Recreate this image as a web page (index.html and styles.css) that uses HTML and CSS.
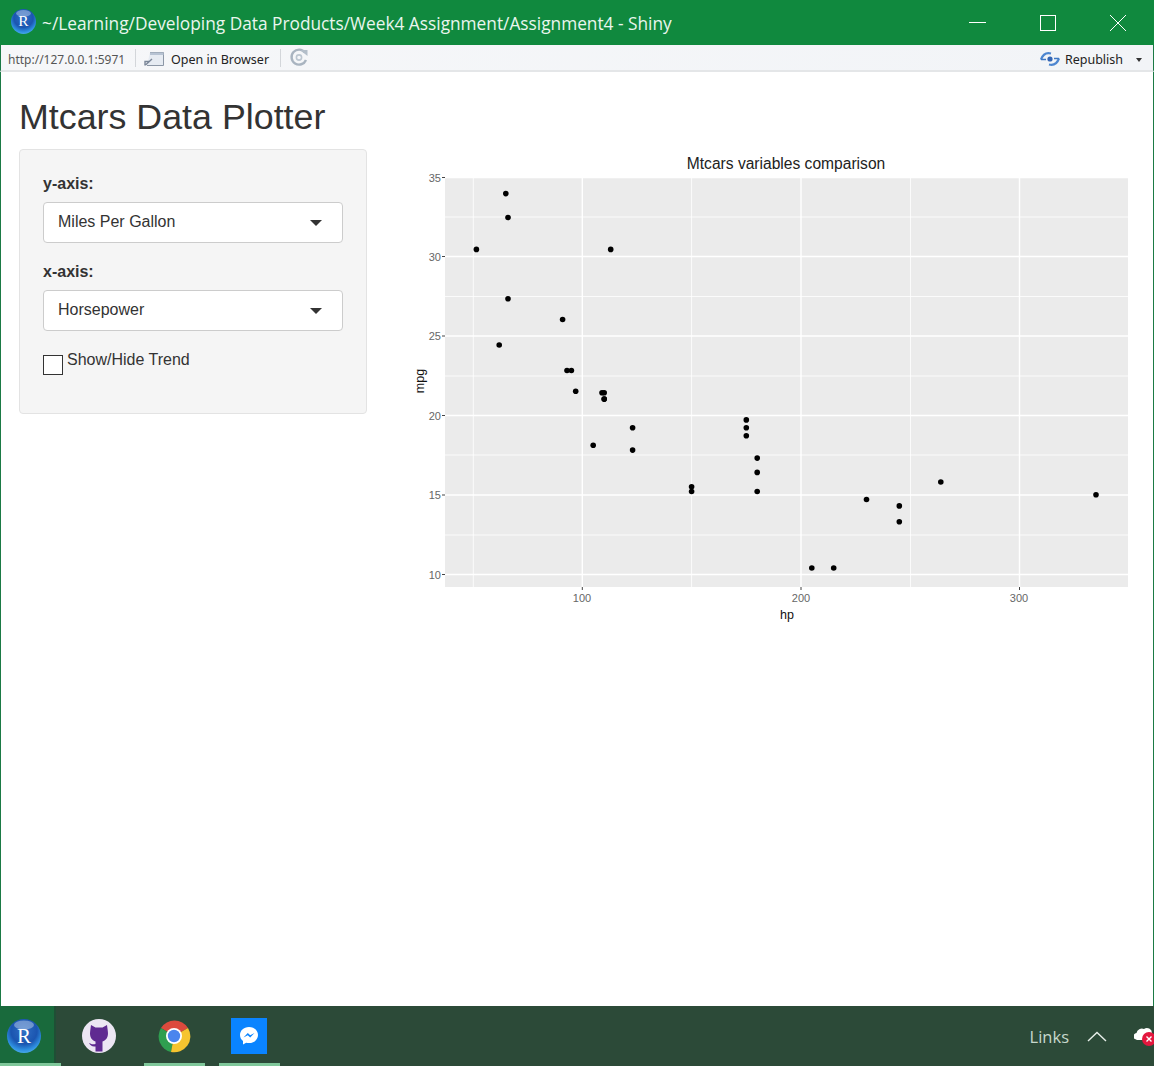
FILE: index.html
```html
<!DOCTYPE html>
<html lang="en">
<head>
<meta charset="utf-8">
<title>Mtcars Data Plotter</title>
<link rel="stylesheet" href="styles.css">
</head>
<body>
<svg class="defs" width="0" height="0" aria-hidden="true">
  <defs>
    <radialGradient id="rball" cx="50%" cy="35%" r="70%">
      <stop offset="0" stop-color="#2f6fc4"/>
      <stop offset="0.55" stop-color="#1b55b0"/>
      <stop offset="0.8" stop-color="#2e8fe0"/>
      <stop offset="1" stop-color="#54b6ee"/>
    </radialGradient>
    <symbol id="rlogo" viewBox="0 0 34 34">
      <circle cx="17" cy="17" r="17" fill="url(#rball)"/>
      <ellipse cx="17" cy="6" rx="10" ry="4.5" fill="#fff" opacity=".35"/>
      <text x="17" y="23.5" class="rlogo-letter" text-anchor="middle">R</text>
    </symbol>
  </defs>
</svg>
<div class="window">
  <header class="titlebar">
    <svg class="titlebar-logo" width="25" height="25"><use href="#rlogo"/></svg>
    <span class="titlebar-text">~/Learning/Developing Data Products/Week4 Assignment/Assignment4 - Shiny</span>
    <div class="winbtns">
      <div class="winbtn"><svg width="18" height="18" viewBox="0 0 18 18"><path d="M0 8.5H17" stroke="#fff"/></svg></div>
      <div class="winbtn"><svg width="18" height="18" viewBox="0 0 18 18"><rect x="1.5" y="1.5" width="15" height="15" fill="none" stroke="#fff"/></svg></div>
      <div class="winbtn"><svg width="18" height="18" viewBox="0 0 18 18"><path d="M1 1L17 17M17 1L1 17" stroke="#fff"/></svg></div>
    </div>
  </header>

  <div class="toolbar">
    <span class="url">http://127.0.0.1:5971</span>
    <span class="sep"></span>
    <svg class="open-icon" width="21" height="17" viewBox="0 0 21 17">
      <path d="M6 2.5H19.5V15.5H3" fill="#e6ebf2" stroke="#8c97a6"/>
      <path d="M6 2.5H19.5V5H6z" fill="#b7c3d3"/>
      <path d="M1 15.5V11.5H5M1.5 15L8 9" fill="none" stroke="#7a8698" stroke-width="1.4"/>
    </svg>
    <span class="tool-text">Open in Browser</span>
    <span class="sep sep-b"></span>
    <svg class="refresh-icon" width="20" height="20" viewBox="0 0 20 20">
      <path d="M16 5.5A7.5 7.5 0 1 0 17 13" fill="none" stroke="#a9b4c0" stroke-width="2.4"/>
      <path d="M11 3H18.5V9z" fill="#b3bec9"/>
      <circle cx="10" cy="10.5" r="2.6" fill="none" stroke="#bcc6d0" stroke-width="1.6"/>
    </svg>
    <div class="toolbar-right">
      <svg width="20" height="16" viewBox="0 0 20 16">
        <path d="M1 8.5C3 3 7 1.5 11 2.5" fill="none" stroke="#4d86d0" stroke-width="2.2"/>
        <path d="M19 7.5C17 13 13 14.5 9 13.5" fill="none" stroke="#4d86d0" stroke-width="2.2"/>
        <path d="M1 8.5H6M14 7.5H19" stroke="#3f78c4" stroke-width="1.6"/>
        <circle cx="10" cy="8" r="2.6" fill="#3566b4"/>
      </svg>
      <span class="tool-text">Republish</span>
      <span class="tool-caret"></span>
    </div>
  </div>

  <main class="page">
    <h1 class="page-title">Mtcars Data Plotter</h1>
    <div class="layout">
      <form class="sidebar">
        <div class="field">
          <label class="field-label">y-axis:</label>
          <div class="select"><span>Miles Per Gallon</span><i class="select-caret"></i></div>
        </div>
        <div class="field">
          <label class="field-label">x-axis:</label>
          <div class="select"><span>Horsepower</span><i class="select-caret"></i></div>
        </div>
        <label class="check">
          <input class="check-box" type="checkbox">
          <span>Show/Hide Trend</span>
        </label>
      </form>

      <svg class="plot" width="730" height="480" viewBox="0 0 730 480">
        <text x="376" y="18.5" class="plot-title" text-anchor="middle">Mtcars variables comparison</text>
        <rect x="35" y="27" width="683" height="410" fill="#ebebeb"/>
        <g class="grid-minor">
          <path d="M35 385H718M35 305H718M35 226H718M35 146.5H718M35 67H718"/>
          <path d="M63.3 27V437M281.6 27V437M500.5 27V437"/>
        </g>
        <g class="grid-major">
          <path d="M35 424.5H718M35 345H718M35 265.5H718M35 186H718M35 106.5H718M35 27.5H718"/>
          <path d="M172.3 27V437M391 27V437M609.5 27V437"/>
        </g>
        <g class="tick">
          <path d="M32 424.5H35M32 345H35M32 265.5H35M32 186H35M32 106.5H35M32 27.5H35"/>
          <path d="M172.3 437V440M391 437V440M609.5 437V440"/>
        </g>
        <g class="tick-label" text-anchor="end">
          <text x="31" y="428.5">10</text>
          <text x="31" y="349">15</text>
          <text x="31" y="269.5">20</text>
          <text x="31" y="190">25</text>
          <text x="31" y="110.5">30</text>
          <text x="31" y="31.5">35</text>
        </g>
        <g class="tick-label" text-anchor="middle">
          <text x="172" y="452">100</text>
          <text x="391" y="452">200</text>
          <text x="609" y="452">300</text>
        </g>
        <text x="377" y="469" class="axis-label" text-anchor="middle">hp</text>
        <text x="0" y="0" class="axis-label" text-anchor="middle" transform="translate(14 231) rotate(-90)">mpg</text>
        <g class="points">
          <circle cx="194.2" cy="249.1"/><circle cx="194.2" cy="249.1"/><circle cx="157" cy="220.5"/>
          <circle cx="194.2" cy="242.8"/><circle cx="336.3" cy="285.8"/><circle cx="183.2" cy="295.3"/>
          <circle cx="489.3" cy="355.9"/><circle cx="89.2" cy="195"/><circle cx="161.4" cy="220.5"/>
          <circle cx="222.6" cy="277.8"/><circle cx="222.6" cy="300.1"/><circle cx="347.2" cy="322.4"/>
          <circle cx="347.2" cy="308.1"/><circle cx="347.2" cy="341.5"/><circle cx="401.8" cy="418"/>
          <circle cx="423.7" cy="418"/><circle cx="456.5" cy="349.5"/><circle cx="98" cy="67.5"/>
          <circle cx="66.4" cy="99.4"/><circle cx="95.8" cy="43.6"/><circle cx="165.7" cy="241.2"/>
          <circle cx="281.6" cy="336.8"/><circle cx="281.6" cy="341.5"/><circle cx="489.3" cy="371.8"/>
          <circle cx="336.3" cy="277.8"/><circle cx="98" cy="148.8"/><circle cx="152.6" cy="169.5"/>
          <circle cx="200.7" cy="99.4"/><circle cx="530.8" cy="332"/><circle cx="336.3" cy="269.9"/>
          <circle cx="686" cy="344.7"/><circle cx="192" cy="242.8"/>
        </g>
      </svg>
    </div>
  </main>

  <footer class="taskbar">
    <div class="task task-r"><svg width="34" height="34"><use href="#rlogo"/></svg></div>
    <div class="task task-open">
      <svg width="34" height="34" viewBox="0 0 34 34">
        <circle cx="17" cy="17" r="17" fill="#ece6f3"/>
        <path d="M9 6L13.5 8.5H20.5L25 6L25.8 12C26.8 18 24 21.5 20.5 22.5V32.5H13.5V27.5C10 28 8.5 26.5 7 24C8.5 24.5 10 26 13.5 25V22.5C10 21.5 7.2 18 8.2 12Z" fill="#5f2a91"/>
      </svg>
    </div>
    <div class="task task-open">
      <svg width="34" height="34" viewBox="0 0 34 34">
        <path d="M17 17L4 9A16 16 0 0 1 31 9Z" fill="#dc4a3d"/>
        <path d="M17 17L4 9A16 16 0 0 0 14 33Z" fill="#2f9e50"/>
        <path d="M17 17L31 9A16 16 0 0 1 14 33Z" fill="#f6c42f"/>
        <circle cx="17" cy="17" r="8" fill="#fff"/>
        <circle cx="17" cy="17" r="6.2" fill="#4a85ee"/>
      </svg>
    </div>
    <div class="task task-open">
      <svg width="36" height="36" viewBox="0 0 36 36">
        <rect width="36" height="36" fill="#0a84ff"/>
        <path d="M18 9C12.5 9 9 12.8 9 17C9 19.6 10.2 21.6 12 23V26.5L15.2 24.7C16 25 17 25.1 18 25.1C23.5 25.1 27 21.2 27 17C27 12.8 23.5 9 18 9Z" fill="#fff"/>
        <path d="M12.5 19.5L16.8 15L19.2 17.3L23.5 15L19.2 19.5L16.8 17.2Z" fill="#0a84ff"/>
      </svg>
    </div>
    <div class="tray">
      <span class="tray-text">Links</span>
      <svg width="20" height="11" viewBox="0 0 20 11"><path d="M1 10L10 1.5L19 10" fill="none" stroke="#e8efea" stroke-width="1.4"/></svg>
      <svg class="tray-cloud" width="20" height="20" viewBox="0 0 20 20">
        <path d="M0 12.5A3.5 3.5 0 0 1 2.5 7A5.5 5.5 0 0 1 10 3A5 5 0 0 1 18 7V14H3Z" fill="#fff"/>
        <circle cx="15" cy="13" r="7" fill="#e3173e"/>
        <path d="M12.5 10.5L17.5 15.5M17.5 10.5L12.5 15.5" stroke="#fff" stroke-width="1.4"/>
      </svg>
    </div>
  </footer>
</div>
</body>
</html>
```

FILE: styles.css
```css
html, body {
  margin: 0;
  padding: 0;
  height: 100%;
}
body {
  font-family: "Liberation Sans", Arial, sans-serif;
  color: #333;
  background: #fff;
  overflow: hidden;
}
.defs {
  display: block;
  height: 0;
}
.rlogo-letter {
  font-family: "Liberation Serif", serif;
  font-size: 21px;
  fill: #fff;
}

.window {
  height: 1066px;
  display: flex;
  flex-direction: column;
}

/* title bar */
.titlebar {
  height: 45px;
  flex: none;
  background: #10893e;
  display: flex;
  align-items: center;
  padding-left: 11px;
  color: #fff;
}
.titlebar-logo {
  margin-top: -2px;
}
.titlebar-text {
  font-family: "Open Sans", "Noto Sans", sans-serif;
  font-size: 17.3px;
  margin-left: 6px;
  padding-top: 2px;
  color: #eaf6ee;
  white-space: nowrap;
}
.winbtns {
  margin-left: auto;
  display: flex;
  margin-right: 1px;
}
.winbtn {
  width: 70px;
  height: 45px;
  display: flex;
  align-items: center;
  justify-content: center;
}

/* toolbar */
.toolbar {
  height: 21px;
  padding: 4px 0 0 8px;
  flex: none;
  display: flex;
  align-items: center;
  border-left: 1px solid #1b7a45;
  border-right: 1px solid #1b7a45;
  border-bottom: 2px solid #e4e6e8;
  background: linear-gradient(to right, #f6f7f9, #f2f4f7);
  font-family: "Noto Sans", "Open Sans", sans-serif;
  font-size: 12.5px;
}
.url {
  color: #555;
  font-size: 12px;
  width: 127px;
  margin-left: -1px;
  white-space: nowrap;
}
.sep {
  width: 1px;
  height: 18px;
  margin-top: -4px;
  background: #d3d6da;
}
.sep-b {
  margin-left: 11px;
}
.open-icon {
  margin: -3px 6px 0 8px;
}
.tool-text {
  color: #222;
  white-space: nowrap;
}
.refresh-icon {
  margin-left: 8px;
  margin-top: -6px;
}
.toolbar-right {
  margin-left: auto;
  display: flex;
  align-items: center;
  gap: 5px;
  padding-right: 11px;
}
.toolbar-right svg {
  margin-top: -2px;
}
.tool-caret {
  width: 0;
  height: 0;
  margin-left: 8px;
  border-left: 3.5px solid transparent;
  border-right: 3.5px solid transparent;
  border-top: 4px solid #333;
}

/* page */
.page {
  flex: 1;
  min-height: 0;
  padding: 0 18px;
  border-left: 1px solid #1b7a45;
  border-right: 1px solid #1b7a45;
}
.page-title {
  font-size: 35.8px;
  font-weight: 400;
  line-height: 40px;
  margin: 25px 0 12px;
  color: #333;
}
.layout {
  display: flex;
  align-items: flex-start;
}
.sidebar {
  width: 348px;
  box-sizing: border-box;
  padding: 22px 23px 21px;
  background: #f5f5f5;
  border: 1px solid #e3e3e3;
  border-radius: 4px;
  flex: none;
}
.field {
  margin-bottom: 17px;
}
.field-label {
  display: block;
  font-size: 16px;
  font-weight: 700;
  line-height: 23px;
  margin-bottom: 7px;
}
.select {
  height: 41px;
  box-sizing: border-box;
  background: #fff;
  border: 1px solid #ccc;
  border-radius: 4px;
  display: flex;
  align-items: center;
  justify-content: space-between;
  padding: 0 20px 2px 14px;
  font-size: 16px;
}
.select-caret {
  width: 0;
  height: 0;
  border-left: 6px solid transparent;
  border-right: 6px solid transparent;
  border-top: 6px solid #333;
  margin-top: 2px;
}
.check {
  display: flex;
  align-items: flex-start;
  font-size: 16px;
  line-height: 23px;
  margin-bottom: 17px;
}
.check-box {
  appearance: none;
  width: 20px;
  height: 20px;
  box-sizing: border-box;
  margin: 7px 4px 0 0;
  border: 1px solid #333;
  background: #fff;
}

/* plot */
.plot {
  display: block;
  flex: none;
  margin: 1px 0 0 43px;
}
.plot-title {
  font-size: 15.6px;
  fill: #222;
}
.grid-major path {
  stroke: #fff;
  stroke-width: 1.4;
  fill: none;
}
.grid-minor path {
  stroke: #fff;
  stroke-width: 1;
  opacity: .8;
  fill: none;
}
.tick path {
  stroke: #444;
  stroke-width: 1;
  fill: none;
}
.tick-label {
  font-size: 11px;
  fill: #666;
}
.axis-label {
  font-size: 12.5px;
  fill: #111;
}
.points circle {
  r: 2.8px;
  fill: #000;
}

/* taskbar */
.taskbar {
  height: 60px;
  flex: none;
  background: #2c4a38;
  display: flex;
  gap: 14px;
}
.task {
  width: 61px;
  height: 60px;
  box-sizing: border-box;
  padding-top: 2px;
  display: flex;
  align-items: center;
  justify-content: center;
}
.task-r {
  justify-content: flex-start;
  padding-left: 7px;
  margin-right: -6px;
  background: linear-gradient(to right, #196a3c 54px, #1f4f35 54px, #1f4f35 56px, transparent 56px);
  border-bottom: 3px solid #7fc79a;
}
.task-open {
  border-bottom: 3px solid #7fc79a;
}
.task-open svg {
  margin-left: -1px;
}
.task:nth-child(2) {
  border-bottom-color: transparent;
}
.tray {
  margin-left: auto;
  display: flex;
  align-items: center;
  gap: 18px;
  height: 60px;
}
.tray-text {
  font-family: "Open Sans", "Noto Sans", sans-serif;
  font-size: 16.5px;
  color: #c6d8cc;
}
.tray-cloud {
  flex: none;
  margin-left: 9px;
}
```
